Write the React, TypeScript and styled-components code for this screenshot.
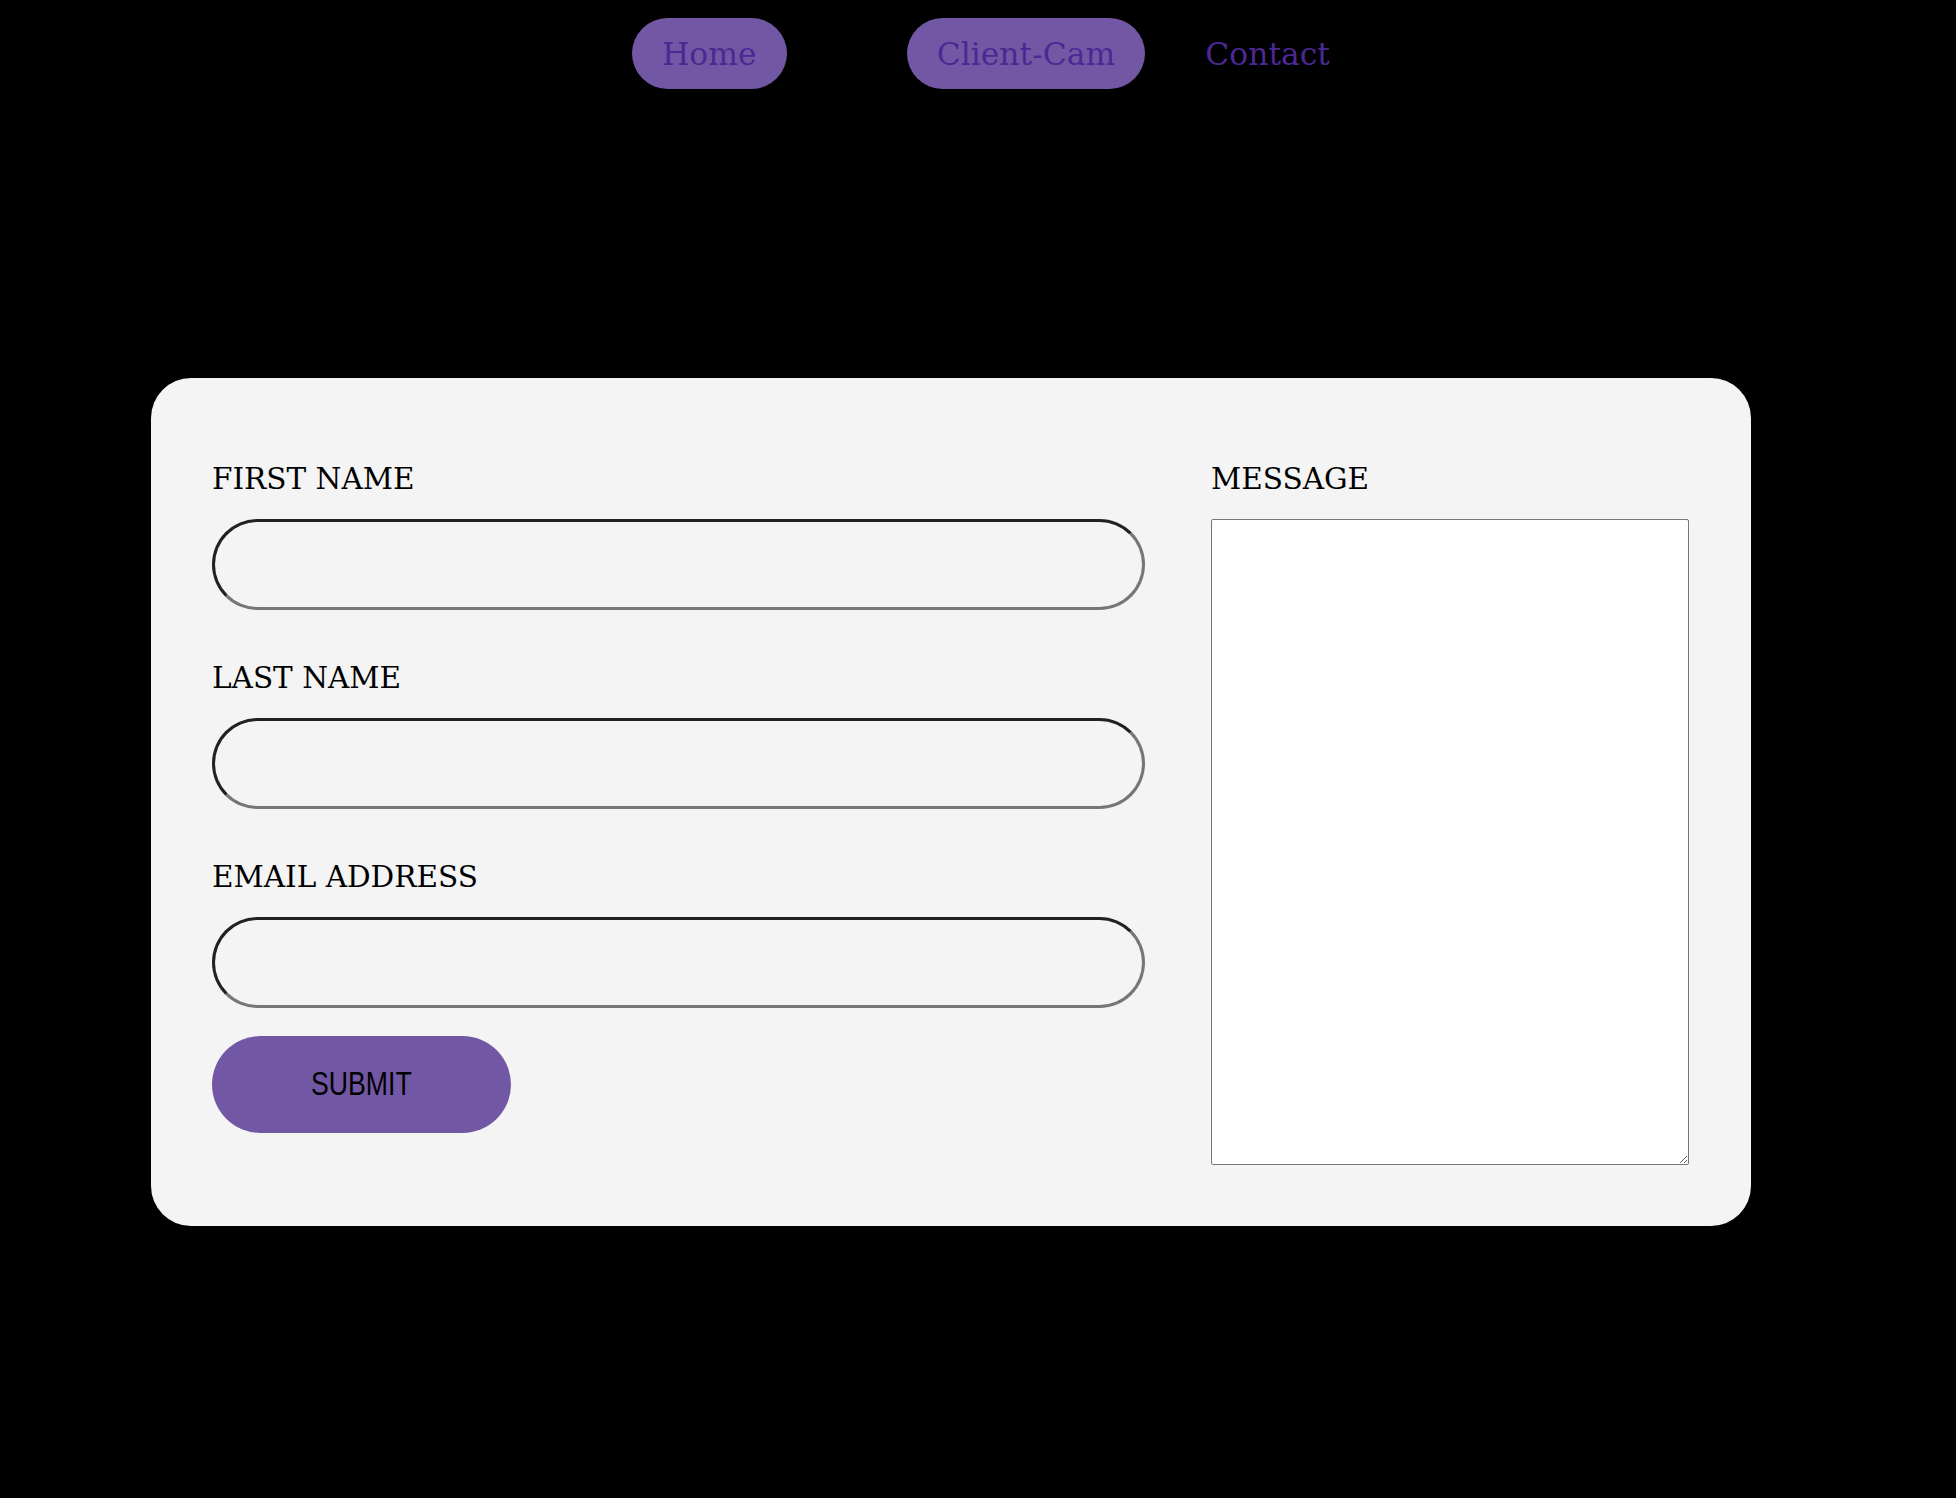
import React from "react";
import styled, { createGlobalStyle } from "styled-components";

const GlobalStyle = createGlobalStyle`
  html, body {
    background: #000000;
  }
  body {
    margin: 8px;
    font-family: "DejaVu Serif", "Liberation Serif", serif;
  }
`;

const Page = styled.div`
  display: flex;
  flex-direction: column;
  min-height: 1482px;
`;

const Nav = styled.nav`
  display: flex;
  align-items: center;
  gap: 30px;
  padding: 10px 0 0 624px;
`;

const NavLink = styled.a<{ $pill?: boolean; $spacer?: boolean }>`
  display: inline-flex;
  align-items: center;
  justify-content: center;
  height: 71px;
  padding: 0 30px;
  width: ${(p) => (p.$spacer ? "60px" : "auto")};
  box-sizing: border-box;
  border-radius: 36px;
  background: ${(p) => (p.$pill ? "#7258a4" : "transparent")};
  color: #4d2893;
  font-family: "DejaVu Serif", "Liberation Serif", serif;
  font-size: 31.4px;
  text-decoration: none;
  cursor: pointer;
`;

const Card = styled.form`
  margin: 289px 0 0 143px;
  width: 1600px;
  box-sizing: border-box;
  padding: 61px 62px 61px 61px;
  background: #f4f4f4;
  border-radius: 40px;
  display: grid;
  grid-template-columns: 933px 478px;
  column-gap: 66px;
  align-items: start;
`;

const Column = styled.div`
  display: flex;
  flex-direction: column;
  gap: 28px;
`;

const Field = styled.div`
  display: flex;
  flex-direction: column;
`;

const Label = styled.label`
  display: block;
  margin: 21px 0 21px;
  font-family: "DejaVu Serif", "Liberation Serif", serif;
  font-size: 29.5px;
  line-height: 38px;
  color: #000000;
`;

const TextInput = styled.input`
  box-sizing: border-box;
  width: 933px;
  height: 91px;
  border: 3px inset rgb(118, 118, 118);
  border-radius: 46px;
  background: #f4f4f4;
  padding: 0 30px;
  font-size: 24px;
  outline: none;
`;

const Submit = styled.button`
  display: flex;
  align-items: center;
  justify-content: center;
  width: 299px;
  height: 97px;
  border: none;
  border-radius: 49px;
  background: #7258a4;
  color: #000000;
  cursor: pointer;
`;

const SubmitText = styled.span`
  display: inline-block;
  font-family: "Liberation Sans", Arial, sans-serif;
  font-size: 32.5px;
  transform: scaleX(0.82);
`;

const MessageArea = styled.textarea`
  box-sizing: border-box;
  display: block;
  width: 478px;
  height: 646px;
  border: 1px solid rgb(118, 118, 118);
  border-radius: 2px;
  background: #ffffff;
  resize: both;
  outline: none;
  font-size: 20px;
`;

export default function App() {
  return (
    <>
      <GlobalStyle />
      <Page>
        <Nav>
          <NavLink $pill href="#">Home</NavLink>
          <NavLink $spacer aria-hidden="true" />
          <NavLink $pill href="#">Client-Cam</NavLink>
          <NavLink href="#">Contact</NavLink>
        </Nav>
        <Card onSubmit={(e) => e.preventDefault()}>
          <Column>
            <Field>
              <Label htmlFor="first">FIRST NAME</Label>
              <TextInput id="first" type="text" />
            </Field>
            <Field>
              <Label htmlFor="last">LAST NAME</Label>
              <TextInput id="last" type="text" />
            </Field>
            <Field>
              <Label htmlFor="email">EMAIL ADDRESS</Label>
              <TextInput id="email" type="email" />
            </Field>
            <div>
              <Submit type="submit">
                <SubmitText>SUBMIT</SubmitText>
              </Submit>
            </div>
          </Column>
          <Field>
            <Label htmlFor="message">MESSAGE</Label>
            <MessageArea id="message" />
          </Field>
        </Card>
      </Page>
    </>
  );
}
